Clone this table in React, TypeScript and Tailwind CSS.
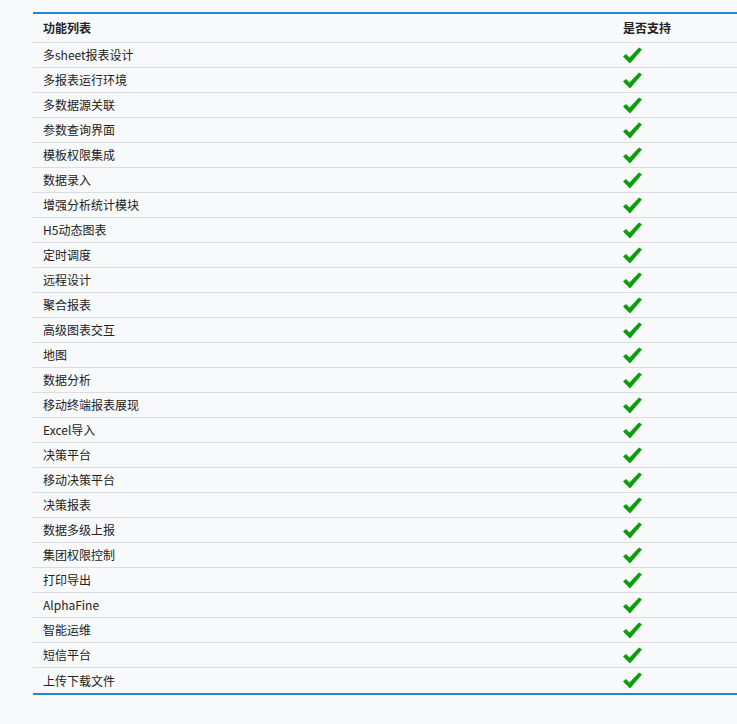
const features = [
  "多sheet报表设计",
  "多报表运行环境",
  "多数据源关联",
  "参数查询界面",
  "模板权限集成",
  "数据录入",
  "增强分析统计模块",
  "H5动态图表",
  "定时调度",
  "远程设计",
  "聚合报表",
  "高级图表交互",
  "地图",
  "数据分析",
  "移动终端报表展现",
  "Excel导入",
  "决策平台",
  "移动决策平台",
  "决策报表",
  "数据多级上报",
  "集团权限控制",
  "打印导出",
  "AlphaFine",
  "智能运维",
  "短信平台",
  "上传下载文件",
];

function Check() {
  return (
    <svg width="19" height="17" viewBox="0 0 19 17" className="block">
      <path d="M0 9.5 L3 7 L6.5 10.5 L16 0.5 L19 2.5 L7 16.5 Z" fill="#0b9e0b" />
    </svg>
  );
}

export default function App() {
  return (
    <div className="min-h-[724px] bg-[#f8f9fb] pt-3 pl-[33px] font-['Microsoft_YaHei','Noto_Sans_CJK_SC',sans-serif] text-[12px] text-[#222]">
      <div className="border-t-2 border-b-2 border-[#1e88d0]">
        <div className="flex h-[29px] items-center border-b border-[#dcdcdc] font-bold">
          <div className="w-[580px] pl-[10px]">功能列表</div>
          <div className="pl-[10px]">是否支持</div>
        </div>
        {features.map((name, i) => (
          <div
            key={name}
            className={`flex h-[25px] items-center ${i < features.length - 1 ? "border-b border-[#dcdcdc]" : ""}`}
          >
            <div className="w-[580px] pl-[10px]">{name}</div>
            <div className="pl-[10px]">
              <Check />
            </div>
          </div>
        ))}
      </div>
    </div>
  );
}
